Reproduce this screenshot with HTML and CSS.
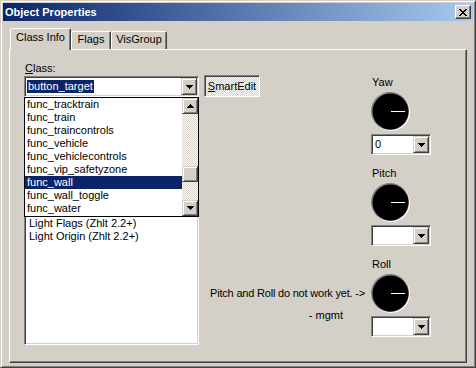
FILE: index.html
```html
<!DOCTYPE html>
<html lang="en">
<head>
    <meta charset="UTF-8">
    <title>Object Properties</title>
    <link rel="stylesheet" href="styles.css">
</head>
<body>
    <div class="window">
        <div class="titlebar">
            <span class="title">Object Properties</span>
            <span class="close">
                <svg width="8" height="7" viewBox="0 0 8 7" shape-rendering="crispEdges"><path d="M0 0h2v1H0zM6 0h2v1H6zM1 1h2v1H1zM5 1h2v1H5zM2 2h4v1H2zM3 3h2v1H3zM2 4h4v1H2zM1 5h2v1H1zM5 5h2v1H5zM0 6h2v1H0zM6 6h2v1H6z" fill="#000"/></svg>
            </span>
        </div>

        <div class="tabs">
            <div class="tab tab-class current">Class Info</div>
            <div class="tab tab-flags">Flags</div>
            <div class="tab tab-vis">VisGroup</div>
        </div>

        <div class="panel">
            <div class="class-col">
                <div class="label"><u>C</u>lass:</div>
                <div class="combo">
                    <span class="combo-text"><span class="sel">button_target</span></span>
                    <span class="btn drop-btn">
                        <svg width="7" height="4" viewBox="0 0 7 4" shape-rendering="crispEdges"><path d="M0 0h7v1H0zM1 1h5v1H1zM2 2h3v1H2zM3 3h1v1H3z" fill="#000"/></svg>
                    </span>
                </div>
                <div class="listbox">
                    <ul>
                        <li>Light Flags (Zhlt 2.2+)</li>
                        <li>Light Origin (Zhlt 2.2+)</li>
                    </ul>
                </div>
                <!-- open dropdown of the class combo -->
                <div class="droplist">
                    <ul class="items">
                        <li>func_tracktrain</li>
                        <li>func_train</li>
                        <li>func_traincontrols</li>
                        <li>func_vehicle</li>
                        <li>func_vehiclecontrols</li>
                        <li>func_vip_safetyzone</li>
                        <li class="current">func_wall</li>
                        <li>func_wall_toggle</li>
                        <li>func_water</li>
                    </ul>
                    <div class="scrollbar">
                        <span class="btn sb-btn">
                            <svg width="7" height="4" viewBox="0 0 7 4" shape-rendering="crispEdges"><path d="M3 0h1v1H3zM2 1h3v1H2zM1 2h5v1H1zM0 3h7v1H0z" fill="#000"/></svg>
                        </span>
                        <div class="sb-track"><span class="btn sb-thumb"></span></div>
                        <span class="btn sb-btn">
                            <svg width="7" height="4" viewBox="0 0 7 4" shape-rendering="crispEdges"><path d="M0 0h7v1H0zM1 1h5v1H1zM2 2h3v1H2zM3 3h1v1H3z" fill="#000"/></svg>
                        </span>
                    </div>
                </div>
            </div>

            <div class="side">
                <div class="side-main">
                    <div class="smartedit"><u>S</u>martEdit</div>
                    <div class="note">Pitch and Roll do not work yet. -&gt;</div>
                    <div class="note-sig">- mgmt</div>
                </div>

                <div class="angles">
                    <div class="angle">
                        <div class="angle-label">Yaw</div>
                        <svg class="dial" width="40" height="40" viewBox="0 0 40 40"><circle cx="20" cy="20" r="19" fill="#fff"/><circle cx="19" cy="19" r="19" fill="#808080"/><circle cx="19.5" cy="19.5" r="18" fill="#000"/><path d="M20 19.5h14" stroke="#fff"/></svg>
                        <div class="combo">
                            <span class="combo-text"><span class="val">0</span></span>
                            <span class="btn drop-btn">
                                <svg width="7" height="4" viewBox="0 0 7 4" shape-rendering="crispEdges"><path d="M0 0h7v1H0zM1 1h5v1H1zM2 2h3v1H2zM3 3h1v1H3z" fill="#000"/></svg>
                            </span>
                        </div>
                    </div>
                    <div class="angle">
                        <div class="angle-label">Pitch</div>
                        <svg class="dial" width="40" height="40" viewBox="0 0 40 40"><circle cx="20" cy="20" r="19" fill="#fff"/><circle cx="19" cy="19" r="19" fill="#808080"/><circle cx="19.5" cy="19.5" r="18" fill="#000"/><path d="M20 19.5h14" stroke="#fff"/></svg>
                        <div class="combo">
                            <span class="combo-text"></span>
                            <span class="btn drop-btn">
                                <svg width="7" height="4" viewBox="0 0 7 4" shape-rendering="crispEdges"><path d="M0 0h7v1H0zM1 1h5v1H1zM2 2h3v1H2zM3 3h1v1H3z" fill="#000"/></svg>
                            </span>
                        </div>
                    </div>
                    <div class="angle">
                        <div class="angle-label">Roll</div>
                        <svg class="dial" width="40" height="40" viewBox="0 0 40 40"><circle cx="20" cy="20" r="19" fill="#fff"/><circle cx="19" cy="19" r="19" fill="#808080"/><circle cx="19.5" cy="19.5" r="18" fill="#000"/><path d="M20 19.5h14" stroke="#fff"/></svg>
                        <div class="combo">
                            <span class="combo-text"></span>
                            <span class="btn drop-btn">
                                <svg width="7" height="4" viewBox="0 0 7 4" shape-rendering="crispEdges"><path d="M0 0h7v1H0zM1 1h5v1H1zM2 2h3v1H2zM3 3h1v1H3z" fill="#000"/></svg>
                            </span>
                        </div>
                    </div>
                </div>
            </div>
        </div>
    </div>
</body>
</html>
```

FILE: styles.css
```css
* {
    margin: 0;
    padding: 0;
    box-sizing: border-box;
}

body {
    background-color: #d4d0c8;
    font-family: "Liberation Sans", Arial, sans-serif;
    font-size: 11px;
    line-height: 13px;
    color: #000;
}

ul {
    list-style: none;
}

/* window frame */
.window {
    width: 476px;
    height: 368px;
    padding: 2px;
    border: 1px solid;
    border-color: #d4d0c8 #404040 #404040 #d4d0c8;
    box-shadow: inset 1px 1px #fff, inset -1px -1px #808080;
    background-color: #d4d0c8;
}

.titlebar {
    height: 18px;
    display: flex;
    align-items: center;
    padding: 0 2px;
    background: linear-gradient(to right, #0a246a, #a6caf0);
}

.title {
    color: #fff;
    font-weight: bold;
}

.close {
    margin-left: auto;
    width: 16px;
    height: 14px;
    display: flex;
    align-items: center;
    justify-content: center;
    background-color: #d4d0c8;
    border: 1px solid;
    border-color: #fff #404040 #404040 #fff;
    box-shadow: inset -1px -1px #808080;
}

/* raised 3d button */
.btn {
    display: flex;
    align-items: center;
    justify-content: center;
    background-color: #d4d0c8;
    border: 1px solid;
    border-color: #d4d0c8 #404040 #404040 #d4d0c8;
    box-shadow: inset 1px 1px #fff, inset -1px -1px #808080;
}

/* tabs */
.tabs {
    display: flex;
    align-items: flex-end;
    height: 21px;
    margin-top: 7px;
    padding-left: 7px;
}

.tab {
    height: 18px;
    padding-top: 1px;
    text-align: center;
    border: 1px solid;
    border-bottom: 0;
    border-color: #fff #404040 #fff #fff;
    box-shadow: inset -1px 0 #808080;
    border-radius: 2px 2px 0 0;
}

.tab.current {
    height: 22px;
    margin-bottom: -1px;
    padding-top: 2px;
    position: relative;
    background-color: #d4d0c8;
}

.tab-class {
    width: 61px;
}

.tab-flags {
    width: 40px;
}

.tab-vis {
    width: 56px;
}

.panel {
    height: 314px;
    margin: 0 6px;
    display: flex;
    padding: 12px 35px 0 14px;
    border: 1px solid;
    border-color: #fff #404040 #404040 #fff;
    box-shadow: inset -1px -1px #808080;
}

/* class column */
.class-col {
    width: 175px;
    position: relative;
}

.label {
    padding-left: 1px;
}

.combo {
    display: flex;
    height: 21px;
    padding: 1px;
    background-color: #fff;
    border: 1px solid;
    border-color: #808080 #fff #fff #808080;
    box-shadow: inset 1px 1px #404040, inset -1px -1px #d4d0c8;
}

.class-col .combo {
    margin-top: 1px;
}

.combo-text {
    flex: 1;
    padding: 2px 0 0 1px;
}

.sel {
    display: inline-block;
    padding: 0 1px;
    background-color: #0a246a;
    color: #fff;
}

.val {
    padding: 0 1px;
}

.drop-btn {
    width: 16px;
    height: 17px;
}

.listbox {
    height: 248px;
    padding: 119px 0 0 4px;
    background-color: #fff;
    border: 1px solid;
    border-color: #808080 #fff #fff #808080;
    box-shadow: inset 1px 1px #404040, inset -1px -1px #d4d0c8;
}

.droplist {
    position: absolute;
    left: 0;
    top: 35px;
    width: 175px;
    height: 120px;
    display: flex;
    background-color: #fff;
    border: 1px solid #000;
}

.items {
    flex: 1;
}

.items li {
    height: 13px;
    padding-left: 2px;
}

.items li.current {
    background-color: #0a246a;
    color: #fff;
}

.scrollbar {
    width: 16px;
    display: flex;
    flex-direction: column;
}

.sb-btn {
    height: 16px;
}

.sb-track {
    flex: 1;
    background: repeating-conic-gradient(#fff 0 25%, #d4d0c8 0 50%) 0 0 / 2px 2px;
}

.sb-thumb {
    height: 16px;
    margin-top: 52px;
}

/* right side */
.side {
    flex: 1;
    display: flex;
    margin-left: 5px;
}

.side-main {
    flex: 1;
    display: flex;
    flex-direction: column;
    padding: 13px 6px 0 0;
}

.smartedit {
    align-self: flex-start;
    width: 56px;
    height: 22px;
    display: flex;
    align-items: center;
    justify-content: center;
    border: 1px solid;
    border-color: #808080 #fff #fff #808080;
    box-shadow: inset 1px 1px #404040;
    background: repeating-conic-gradient(#fff 0 25%, #d4d0c8 0 50%) 0 0 / 2px 2px;
}

.note {
    align-self: flex-end;
    margin-top: 190px;
    white-space: nowrap;
    letter-spacing: -0.2px;
}

.note-sig {
    align-self: flex-end;
    margin-top: 9px;
    margin-right: 22px;
    white-space: nowrap;
}

.angles {
    width: 60px;
    padding-top: 14px;
}

.angle + .angle {
    margin-top: 12px;
}

.angle-label {
    padding-left: 1px;
}

.dial {
    display: block;
    margin-top: 3px;
}

.angle .combo {
    margin-top: 2px;
    width: 60px;
}
```
